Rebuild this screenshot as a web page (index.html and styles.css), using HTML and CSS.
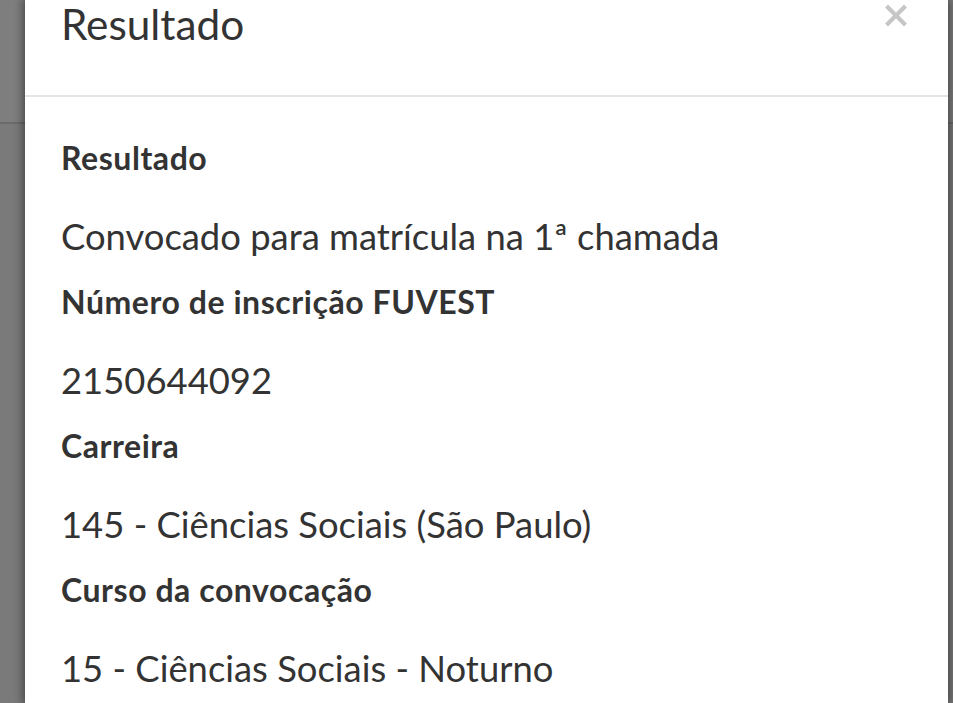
FILE: index.html
```html
<!DOCTYPE html>
<html lang="pt-BR">
<head>
<meta charset="utf-8">
<title>Resultado</title>
<link rel="stylesheet" href="styles.css">
</head>
<body>
<div class="backdrop">
  <div class="modal">
    <div class="modal-header">
      <h4 class="modal-title">Resultado</h4>
      <button class="close" type="button" aria-label="Fechar">
        <svg width="24" height="23" viewBox="0 0 24 23"><path d="M2.5 2 L21.5 21 M21.5 2 L2.5 21" stroke="#c6c6c6" stroke-width="4.2" fill="none"/></svg>
      </button>
    </div>
    <div class="modal-body">
      <div class="item">
        <div class="label">Resultado</div>
        <div class="value">Convocado para matrícula na 1ª chamada</div>
      </div>
      <div class="item">
        <div class="label">Número de inscrição FUVEST</div>
        <div class="value">2150644092</div>
      </div>
      <div class="item">
        <div class="label">Carreira</div>
        <div class="value">145 - Ciências Sociais (São Paulo)</div>
      </div>
      <div class="item">
        <div class="label">Curso da convocação</div>
        <div class="value">15 - Ciências Sociais - Noturno</div>
      </div>
    </div>
  </div>
</div>
</body>
</html>
```

FILE: styles.css
```css
html, body {
  margin: 0;
  padding: 0;
  height: 100%;
  overflow: hidden;
}

body {
  font-family: Lato, "Open Sans", sans-serif;
  color: #333;
}

.backdrop {
  min-height: 100vh;
  box-sizing: border-box;
  padding: 0 5px 0 25px;
  background: linear-gradient(to bottom, #7e7e7e 0 122px, #6b6b6b 122px 124px, #7a7a7a 124px);
}

.modal {
  background: #fff;
  min-height: 100vh;
  box-shadow: 0 0 9px 2px rgba(0, 0, 0, 0.45);
}

.modal-header {
  display: flex;
  justify-content: space-between;
  align-items: flex-start;
  padding: 0 40px 47px 36px;
  border-bottom: 2px solid #e5e5e5;
}

.modal-title {
  margin: 0;
  font-size: 42.3px;
  font-weight: 400;
  line-height: 48px;
  color: #333;
}

.close {
  margin: 4px 0 0 0;
  padding: 0;
  border: 0;
  background: transparent;
  line-height: 0;
  cursor: pointer;
}

.modal-body {
  padding: 43px 36px 0 36px;
  display: flex;
  flex-direction: column;
  gap: 26px;
}

.label {
  font-size: 32px;
  font-weight: 700;
  letter-spacing: 0.55px;
  line-height: 36px;
  margin-bottom: 38px;
}

.value {
  font-size: 36.4px;
  font-weight: 400;
  line-height: 44px;
}
```
